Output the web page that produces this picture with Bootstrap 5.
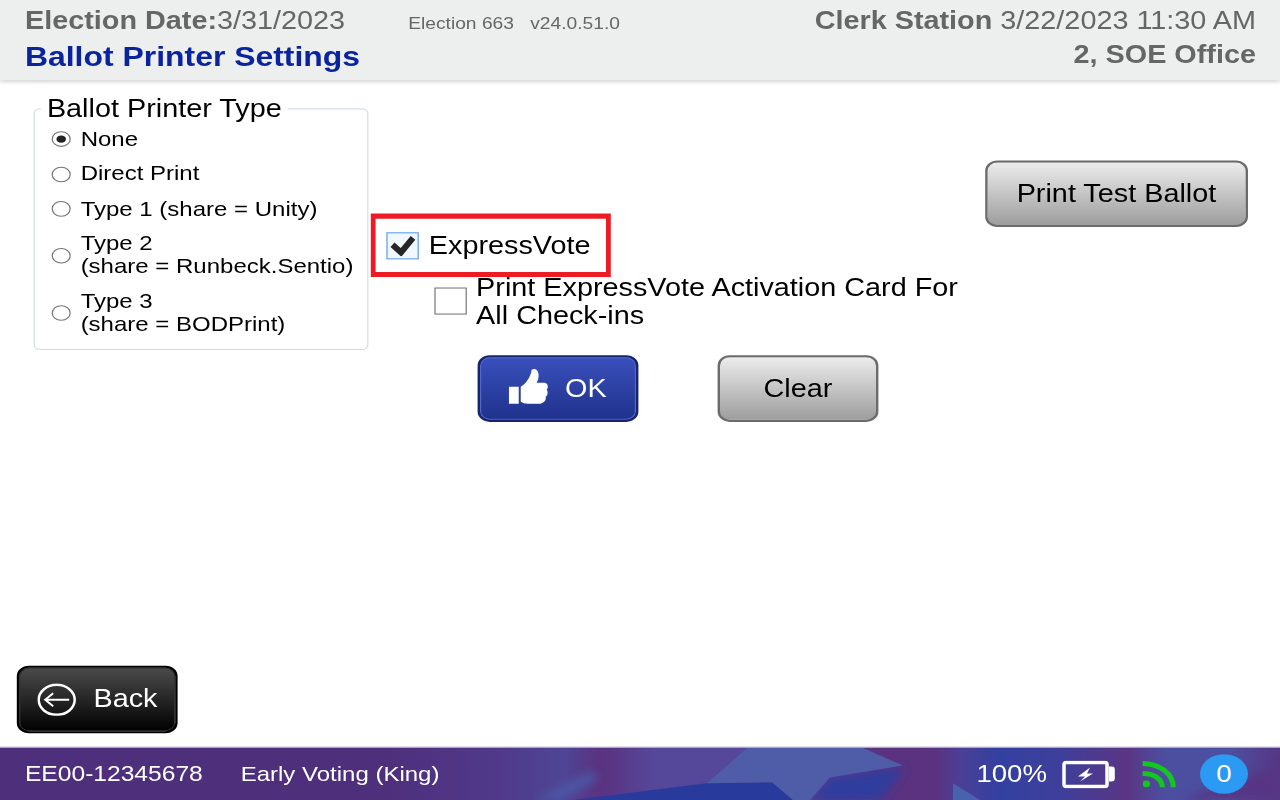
<!DOCTYPE html>
<html lang="en">
<head>
    <meta charset="UTF-8">
    <meta name="viewport" content="width=device-width, initial-scale=1.0">
    <title>Ballot Printer Settings</title>
    <link href="https://cdn.jsdelivr.net/npm/bootstrap@5.3.3/dist/css/bootstrap.min.css" rel="stylesheet">
    <style>
        html, body { height: 100%; }
        body {
            font-family: "Liberation Sans", Arial, sans-serif;
            color: #000;
            background: #fff;
            overflow: hidden;
        }
        .app-shell {
            width: 1066.67px;
            height: 768px;
            transform: scale(1.2, 1.04167);
            transform-origin: 0 0;
        }

        /* top bar */
        .top-bar {
            height: 77px;
            flex: 0 0 77px;
            background: #edeeee;
            box-shadow: 0 1px 4px rgba(0, 0, 0, .25);
            padding: 6px 20px 0 20.8px;
            color: #666;
            z-index: 2;
        }
        .top-line { font-size: 24px; line-height: 28px; }
        .top-sub { font-size: 16px; margin-left: 52.6px; }
        .top-sub span + span { margin-left: 13.6px; }
        .screen-title { font-size: 26.6px; line-height: 30px; margin-top: 1.5px; font-weight: 700; color: #0a239e; }
        .office-line { font-size: 24px; line-height: 30px; margin-top: 3px; font-weight: 700; }

        /* printer type box */
        .type-box {
            width: 279.2px;
            height: 231.5px;
            margin: 27px 0 0 28.3px;
            border: 1px solid #d5dde4;
            border-radius: 5px;
            padding: 16.6px 8px 0 13.8px;
            position: relative;
        }
        .type-legend {
            position: absolute;
            top: -14px;
            left: 4.6px;
            padding: 0 5.2px;
            background: #fff;
            font-size: 24px;
            line-height: 26px;
        }
        .type-row { font-size: 20px; line-height: 22px; gap: 8.3px; }
        .type-row + .type-row { margin-top: 11.6px; }
        .radio-dot {
            width: 15.8px;
            height: 15px;
            flex: 0 0 15.8px;
            margin-top: 2px;
            border: 1px solid #757575;
            border-radius: 50%;
            background: #fff;
            position: relative;
        }
        .radio-dot.on::after {
            content: "";
            position: absolute;
            inset: 3px;
            border-radius: 50%;
            background: #222;
        }

        /* middle column */
        .mid-col { width: 500px; margin: 128.4px 0 0 1.7px; }
        .ev-box {
            width: 200px;
            height: 60.5px;
            border-style: solid;
            border-color: #ed1c24;
            border-width: 5px 4.2px;
            padding-left: 9px;
            gap: 8.1px;
            font-size: 24px;
        }
        .tick-box {
            width: 27.1px;
            height: 26px;
            flex: 0 0 27.1px;
            border: 1px solid #757575;
            background: #fff;
        }
        .tick-box.on { background: #f1f7ff; border-color: #5c9cf2; }
        .activation-row {
            margin: -4px 0 0 52.5px;
            gap: 8px;
            font-size: 24px;
            line-height: 27px;
        }
        .action-row { margin: 24.8px 0 0 89.1px; gap: 66.7px; }

        /* buttons */
        .btn-kiosk {
            height: 64.3px;
            width: 133.3px;
            border-radius: 10px;
            font-size: 24px;
            display: flex;
            align-items: center;
            justify-content: center;
            padding: 0;
        }
        .btn-kiosk.grey {
            color: #000;
            border: 2.5px solid #6b6b6b;
            background: linear-gradient(#ececec, #9d9d9d);
        }
        .btn-kiosk.blue {
            color: #fff;
            border: 2px solid #16246e;
            background: linear-gradient(#3a50bc, #1f318c);
            box-shadow: inset 0 0 0 1px #5566c4;
            gap: 14.2px;
        }
        .btn-kiosk.black {
            color: #fff;
            border: 2px solid #000;
            background: linear-gradient(#4b4b4b, #000);
            box-shadow: inset 0 0 0 1px #333;
            gap: 14.2px;
            margin: 0 0 13.4px 14px;
            width: 134.4px;
        }
        .thumb-icon { margin-top: -4px; }
        .test-btn { width: 219.2px !important; margin: 76.6px 26.7px 0 auto; }

        /* bottom bar */
        .bottom-bar {
            height: 51px;
            flex: 0 0 51px;
            position: relative;
            overflow: hidden;
            background: #4e2f7c;
            border-top: 1px solid #b9b1cc;
            color: #fff;
            padding: 0 26.7px 0 20.8px;
        }
        .bar-art { position: absolute; inset: 0; width: 100%; height: 100%; }
        .bar-item { position: relative; }
        .unit-id { font-size: 20.5px; }
        .mode-name { font-size: 20px; margin-left: 31.6px; }
        .charge-text { font-size: 23px; margin-left: auto; }
        .battery-icon { margin-left: 12.5px; }
        .signal-icon { margin-left: 23.3px; }
        .count-pill {
            width: 40px;
            height: 38.4px;
            border-radius: 50%;
            background: #2b9af3;
            margin-left: 19.2px;
            font-size: 23px;
        }
    </style>
</head>
<body>
    <div class="app-shell d-flex flex-column">
        <header class="top-bar d-flex justify-content-between">
            <div>
                <div class="top-line d-flex align-items-baseline">
                    <span><b>Election Date:</b>3/31/2023</span>
                    <span class="top-sub"><span>Election 663</span><span>v24.0.51.0</span></span>
                </div>
                <div class="screen-title">Ballot Printer Settings</div>
            </div>
            <div class="text-end">
                <div class="top-line"><b>Clerk Station</b> 3/22/2023 11:30 AM</div>
                <div class="office-line">2, SOE Office</div>
            </div>
        </header>

        <main class="flex-grow-1 d-flex flex-column justify-content-between">
            <div class="d-flex align-items-start">
                <section class="type-box">
                    <div class="type-legend">Ballot Printer Type</div>
                    <div class="type-row d-flex align-items-center"><span class="radio-dot on"></span><span>None</span></div>
                    <div class="type-row d-flex align-items-center"><span class="radio-dot"></span><span>Direct Print</span></div>
                    <div class="type-row d-flex align-items-center"><span class="radio-dot"></span><span>Type 1 (share = Unity)</span></div>
                    <div class="type-row d-flex align-items-center"><span class="radio-dot"></span><span>Type 2<br>(share = Runbeck.Sentio)</span></div>
                    <div class="type-row d-flex align-items-center"><span class="radio-dot"></span><span>Type 3<br>(share = BODPrint)</span></div>
                </section>

                <section class="mid-col">
                    <div class="ev-box d-flex align-items-center">
                        <span class="tick-box on d-flex align-items-center justify-content-center">
                            <svg width="21.7" height="21.1" viewBox="0 0 26 22" preserveAspectRatio="none"><path d="M2.5 10.5 L11 18 L23 3.5" fill="none" stroke="#262626" stroke-width="6"/></svg>
                        </span>
                        <span>ExpressVote</span>
                    </div>
                    <div class="activation-row d-flex align-items-center">
                        <span class="tick-box"></span>
                        <span>Print ExpressVote Activation Card For<br>All Check-ins</span>
                    </div>
                    <div class="action-row d-flex">
                        <button class="btn btn-kiosk blue" type="button">
                            <svg class="thumb-icon" width="32.3" height="33.6" viewBox="0 0 39 35" preserveAspectRatio="none" fill="#fff"><rect x="0" y="18" width="10" height="17"/><path d="M12 18 C17 15 22 9 23 1 C27 -1 30 2 30 7 C30 10 29 12 28 14 L36 14 C40 15 40 19 38 21 C40 23 39 27 37 28 C38 31 36 34 32 35 L19 35 C16 35 14 34 12 33 Z"/></svg>
                            <span>OK</span>
                        </button>
                        <button class="btn btn-kiosk grey" type="button">Clear</button>
                    </div>
                </section>

                <button class="btn btn-kiosk grey test-btn" type="button">Print Test Ballot</button>
            </div>

            <div class="d-flex">
                <button class="btn btn-kiosk black" type="button">
                    <svg width="32.5" height="31.7" viewBox="0 0 39 33" preserveAspectRatio="none" fill="none" stroke="#fff"><ellipse cx="19.5" cy="16.5" rx="18" ry="15" stroke-width="2.5"/><path d="M32 16.5 H8 M16 10 L8 16.5 L16 23" stroke-width="2"/></svg>
                    <span>Back</span>
                </button>
            </div>
        </main>

        <footer class="bottom-bar d-flex align-items-center">
            <svg class="bar-art" viewBox="0 0 1280 53" preserveAspectRatio="none">
                <defs>
                    <linearGradient id="barFade" gradientUnits="userSpaceOnUse" x1="0" x2="1280" y1="0" y2="0">
                        <stop offset="0" stop-color="#4e2f7c"/>
                        <stop offset=".3" stop-color="#4e2f7c"/>
                        <stop offset=".39" stop-color="#50398a"/>
                        <stop offset=".44" stop-color="#4f4595"/>
                        <stop offset=".47" stop-color="#5a3280"/>
                        <stop offset=".51" stop-color="#55479a"/>
                        <stop offset=".59" stop-color="#55479a"/>
                        <stop offset=".69" stop-color="#5a3280"/>
                        <stop offset=".73" stop-color="#5a3280"/>
                        <stop offset=".75" stop-color="#4c3f96"/>
                        <stop offset=".78" stop-color="#3340a0"/>
                        <stop offset=".83" stop-color="#3f3f9a"/>
                        <stop offset=".88" stop-color="#5a3584"/>
                        <stop offset=".91" stop-color="#4c4ea0"/>
                        <stop offset=".96" stop-color="#4c50a0"/>
                        <stop offset="1" stop-color="#563684"/>
                    </linearGradient>
                    <filter id="softEdge" x="-30%" y="-60%" width="160%" height="220%"><feGaussianBlur stdDeviation="5"/></filter>
                </defs>
                <rect width="1280" height="53" fill="url(#barFade)"/>
                <path d="M810 53 L830 30 L905 20 L880 53 Z" fill="#2f3d9e" filter="url(#softEdge)"/>
                <path d="M590 25 L600 30 L560 53 L535 53 Z" fill="#4c58a6" filter="url(#softEdge)"/>
                <path d="M573 53 L707 36 L772 35 L793 53 Z" fill="#283a9c"/>
                <path d="M747 0 H863 L903 18 L830 30 L810 53 H793 L772 35 L707 36 Z" fill="#4f5ca8"/>
                <path d="M953 36 L980 53 H953 Z" fill="#4763ae"/>
                <path d="M1280 18 L1280 53 H1180 Z" fill="#563684" filter="url(#softEdge)"/>
            </svg>
            <span class="bar-item unit-id">EE00-12345678</span>
            <span class="bar-item mode-name">Early Voting (King)</span>
            <span class="bar-item charge-text">100%</span>
            <svg class="bar-item battery-icon" width="44.2" height="27" viewBox="0 0 53 28" preserveAspectRatio="none"><rect x="2" y="2" width="43" height="24" rx="2" fill="none" stroke="#fff" stroke-width="3.5"/><path d="M47 6 H50 Q53 6 53 9 V18 Q53 21 50 21 H47 Z" fill="#fff"/><path d="M28 7 L16 16 H23 L18 21 L31 13 H25 Z" fill="#fff"/></svg>
            <svg class="bar-item signal-icon" width="28.3" height="26" viewBox="0 0 34 27" preserveAspectRatio="none" fill="none" stroke="#12c81e" stroke-width="5"><path d="M0 3 C18 3 31 14 31 27"/><path d="M0 13 C11 13 20 18 20 27"/><ellipse cx="4" cy="23.5" rx="3.7" ry="3.4" fill="#12c81e" stroke="none"/></svg>
            <span class="bar-item count-pill d-flex align-items-center justify-content-center">0</span>
        </footer>
    </div>
    <script src="https://cdn.jsdelivr.net/npm/bootstrap@5.3.3/dist/js/bootstrap.bundle.min.js"></script>
</body>
</html>
